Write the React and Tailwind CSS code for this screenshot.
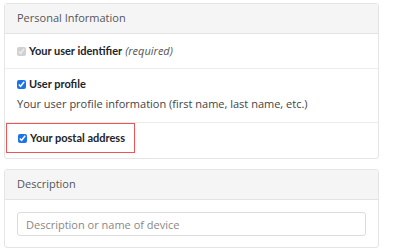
const ROWS_FONT = { fontFamily: '"Open Sans", "Noto Sans", sans-serif' };
const BOLD_FONT = { fontFamily: 'Lato, "Open Sans", sans-serif' };

function Check({ disabled }) {
  return (
    <input
      type="checkbox"
      checked
      readOnly
      disabled={disabled}
      className="w-[9px] h-[9px] m-0 accent-[#1a73e8] shrink-0"
    />
  );
}

export default function App() {
  return (
    <div className="bg-white w-[400px] h-[250px] pl-[4px] pt-[3px] text-[11px] text-[#212529]" style={ROWS_FONT}>
      <div className="w-[375px] border border-[#e5e5e5] rounded-[3px]">
        <div className="h-[30px] bg-[#f5f5f5] border-b border-[#e3e3e3] px-[12px] flex items-center text-[#555]">
          Personal Information
        </div>
        <div className="h-[35px] border-b border-[#ececec] px-[12px] flex items-center gap-[3px]">
          <Check disabled />
          <span className="font-bold text-[11px]" style={BOLD_FONT}>Your user identifier</span>
          <span className="italic text-[#555]">(required)</span>
        </div>
        <div className="h-[54px] border-b border-[#ececec] px-[12px] pt-[7px]">
          <div className="flex items-center gap-[3px] h-[17px]">
            <Check />
            <span className="font-bold text-[11px]" style={BOLD_FONT}>User profile</span>
          </div>
          <div className="mt-[3px] text-[#444]">Your user profile information (first name, last name, etc.)</div>
        </div>
        <div className="h-[35px] pl-[1px] pb-[5px]">
          <div className="w-[129px] h-[30px] border border-[#ee5555] px-[11px] flex items-center gap-[3px] whitespace-nowrap">
            <Check />
            <span className="font-bold text-[11px]" style={BOLD_FONT}>Your postal address</span>
          </div>
        </div>
      </div>

      <div className="w-[375px] mt-[10px] border border-[#e5e5e5] rounded-[3px]">
        <div className="h-[30px] bg-[#f5f5f5] border-b border-[#e3e3e3] px-[12px] flex items-center text-[#555]">
          Description
        </div>
        <div className="px-[12px] pt-[12px] pb-[11px]">
          <input
            type="text"
            placeholder="Description or name of device"
            className="w-full h-[24px] border border-[#dcdcdc] rounded-[3px] px-[8px] text-[11px] placeholder:text-[#888] outline-none"
            style={ROWS_FONT}
          />
        </div>
      </div>
    </div>
  );
}
